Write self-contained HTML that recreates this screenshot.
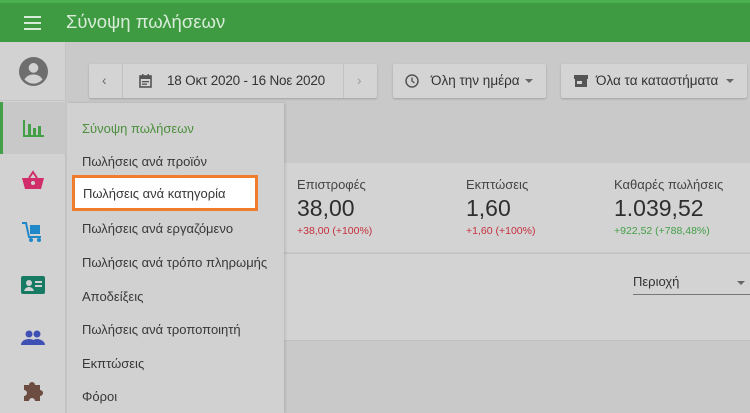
<!DOCTYPE html>
<html><head><meta charset="utf-8"><style>
*{margin:0;padding:0;box-sizing:border-box}
body{width:750px;height:413px;overflow:hidden;background:#c9c9c9;font-family:"Liberation Sans","DejaVu Sans",sans-serif;position:relative;color:#333}
.hdr{position:absolute;left:0;top:0;width:750px;height:42px;background:#3f9b42;border-top:3px solid #4bb04f}
.hdr .t{position:absolute;left:66px;top:8px;font-size:18.5px;color:#d9ecd9}
.burger{position:absolute;left:24px;top:13px;width:17px}
.burger i{display:block;height:2px;background:#d9ecd9;margin-bottom:4px}
.side{position:absolute;left:0;top:42px;width:66px;height:371px;background:#d2d2d2;border-right:1px solid #c4c4c4}
.av{position:absolute;left:0;top:0;width:66px;height:59px;border-bottom:1px solid #c6c6c6}
.act{position:absolute;left:0;top:60px;width:66px;height:52px;background:#c8c8c8;border-left:3px solid #43a047}
.ic{position:absolute;left:21px}
.btn{position:absolute;top:64px;height:34px;background:#d4d4d4;box-shadow:0 1px 2px rgba(0,0,0,.2);border-radius:2px;font-size:13.5px;color:#333;line-height:34px}
.card{position:absolute;left:283px;top:163px;width:467px;height:89px;background:#d3d3d3}
.card2{position:absolute;left:283px;top:253px;width:467px;height:88px;background:#d3d3d3;border-top:1px solid #c2c2c2;border-bottom:1px solid #c2c2c2}
.st{position:absolute;top:14px;font-size:13px;color:#444}
.st b{display:block;font-weight:normal;font-size:23px;color:#2e2e2e;margin-top:3px}
.st s{text-decoration:none;display:block;font-size:10.5px;margin-top:3px}
.menu{position:absolute;left:67px;top:103px;width:217px;height:310px;background:#d1d1d1;box-shadow:1px 0 3px rgba(0,0,0,.15)}
.mi{position:absolute;left:15px;font-size:13px;color:#383838}
.sel{position:absolute;left:72px;top:175px;width:186px;height:36px;background:#fff;border:3px solid #ef7d2c}
</style></head><body>
<div class="hdr"><div class="burger"><i></i><i></i><i></i></div><div class="t">Σύνοψη πωλήσεων</div></div>
<div class="side">
<div class="av"><svg class="ic" style="left:19px;top:15px" width="29" height="29" viewBox="0 0 24 24"><circle cx="12" cy="12" r="12" fill="#6e6e6e"/><circle cx="12" cy="9" r="4" fill="#d2d2d2"/><path d="M4.5 18.5c2-3 4.5-4 7.5-4s5.5 1 7.5 4c-2 2.2-4.6 3.5-7.5 3.5s-5.5-1.3-7.5-3.5z" fill="#d2d2d2"/></svg></div>
<div class="act"><svg style="position:absolute;left:20px;top:17px" width="22" height="18" viewBox="0 0 22 18"><path d="M1 1v16h20" stroke="#43a047" stroke-width="2" fill="none"/><rect x="5" y="5" width="3" height="11" fill="#43a047"/><rect x="10" y="9" width="3" height="7" fill="#43a047"/><rect x="15" y="7" width="3" height="9" fill="#43a047"/></svg></div>
<svg class="ic" style="top:128px" width="24" height="20" viewBox="0 0 24 20"><path d="M8 8l4-6 4 6" stroke="#d02d6a" stroke-width="2" fill="none"/><path d="M1 8h22l-3 11H4z" fill="#d02d6a"/><circle cx="12" cy="13" r="2" fill="#d2d2d2"/></svg>
<svg class="ic" style="top:179px" width="24" height="22" viewBox="0 0 24 22"><path d="M1 2h4l3 14h12" stroke="#1f88c9" stroke-width="2" fill="none"/><rect x="9" y="4" width="10" height="9" fill="#1f88c9"/><circle cx="10" cy="19" r="2" fill="#1f88c9"/><circle cx="18" cy="19" r="2" fill="#1f88c9"/></svg>
<svg class="ic" style="top:234px" width="24" height="18" viewBox="0 0 24 18"><rect width="24" height="18" rx="2" fill="#177a63"/><circle cx="8" cy="7" r="3" fill="#d2d2d2"/><path d="M3 15c1-3 3-4 5-4s4 1 5 4z" fill="#d2d2d2"/><rect x="14" y="5" width="7" height="2" fill="#d2d2d2"/><rect x="14" y="9" width="7" height="2" fill="#d2d2d2"/></svg>
<svg class="ic" style="top:288px" width="24" height="16" viewBox="0 0 24 16"><circle cx="8" cy="4" r="3.5" fill="#3f51b5"/><circle cx="16" cy="4" r="3.5" fill="#3f51b5"/><path d="M0 15c0-4 4-6 8-6s8 2 8 6z" fill="#3f51b5"/><path d="M10 15c0-4 3-6 6-6s8 2 8 6z" fill="#3f51b5"/></svg>
<svg class="ic" style="top:336px" width="24" height="24" viewBox="0 0 24 24"><path d="M3 7h5a3 3 0 116 0h5v5a3 3 0 110 6v5h-5a3 3 0 10-6 0H3v-5a3 3 0 100-6z" fill="#6d4c41"/></svg>
</div>
<div class="btn" style="left:89px;width:288px">
<span style="position:absolute;left:13px;color:#666">‹</span>
<span style="position:absolute;left:33px;top:0;width:1px;height:34px;background:#c2c2c2"></span>
<svg style="position:absolute;left:50px;top:10px" width="13" height="14" viewBox="0 0 13 14"><rect x="1" y="2" width="11" height="11" fill="none" stroke="#555" stroke-width="1.6"/><rect x="1" y="2" width="11" height="3" fill="#555"/><rect x="3" y="7" width="7" height="1.3" fill="#555"/><rect x="3" y="9.5" width="5" height="1.3" fill="#555"/><rect x="3" y="0" width="1.5" height="3" fill="#555"/><rect x="8.5" y="0" width="1.5" height="3" fill="#555"/></svg>
<span style="position:absolute;left:78px;letter-spacing:-0.2px">18 Οκτ 2020 - 16 Νοε 2020</span>
<span style="position:absolute;left:254px;top:0;width:1px;height:34px;background:#c2c2c2"></span>
<span style="position:absolute;left:268px;color:#999">›</span></div>
<div class="btn" style="left:393px;width:153px">
<svg style="position:absolute;left:12px;top:10px" width="14" height="14" viewBox="0 0 14 14"><circle cx="7" cy="7" r="6" fill="none" stroke="#555" stroke-width="1.5"/><path d="M7 3.5V7l2.5 2" stroke="#555" stroke-width="1.4" fill="none"/></svg>
<span style="position:absolute;left:38px">Όλη την ημέρα</span><span style="position:absolute;left:132px;top:15px;border:4px solid transparent;border-top:4px solid #666"></span></div>
<div class="btn" style="left:561px;width:186px">
<svg style="position:absolute;left:13px;top:11px" width="14" height="12" viewBox="0 0 14 12"><rect width="14" height="4" fill="#555"/><rect x="1" y="4" width="12" height="8" fill="#555"/><rect x="3" y="6" width="5" height="3" fill="#d4d4d4"/></svg>
<span style="position:absolute;left:35px">Όλα τα καταστήματα</span><span style="position:absolute;left:165px;top:15px;border:4px solid transparent;border-top:4px solid #666"></span></div>
<div class="card">
<div class="st" style="left:14px">Επιστροφές<b>38,00</b><s style="color:#c62f3c">+38,00 (+100%)</s></div>
<div class="st" style="left:183px">Εκπτώσεις<b>1,60</b><s style="color:#c62f3c">+1,60 (+100%)</s></div>
<div class="st" style="left:331px">Καθαρές πωλήσεις<b>1.039,52</b><s style="color:#43a047">+922,52 (+788,48%)</s></div>
</div>
<div class="card2"><span style="position:absolute;left:350px;top:20px;font-size:13px;color:#333">Περιοχή</span><span style="position:absolute;left:454px;top:27px;border:4px solid transparent;border-top:4px solid #666"></span><span style="position:absolute;left:350px;top:40px;width:117px;height:1px;background:#777"></span></div>
<div class="menu">
<div class="mi" style="top:18px;color:#4c8f3c">Σύνοψη πωλήσεων</div>
<div class="mi" style="top:51px">Πωλήσεις ανά προϊόν</div>
<div class="mi" style="top:118px">Πωλήσεις ανά εργαζόμενο</div>
<div class="mi" style="top:152px">Πωλήσεις ανά τρόπο πληρωμής</div>
<div class="mi" style="top:186px">Αποδείξεις</div>
<div class="mi" style="top:219px">Πωλήσεις ανά τροποποιητή</div>
<div class="mi" style="top:253px">Εκπτώσεις</div>
<div class="mi" style="top:286px">Φόροι</div>
</div>
<div class="sel"><span style="position:absolute;left:8px;top:8px;font-size:13px;color:#383838">Πωλήσεις ανά κατηγορία</span></div>
</body></html>
